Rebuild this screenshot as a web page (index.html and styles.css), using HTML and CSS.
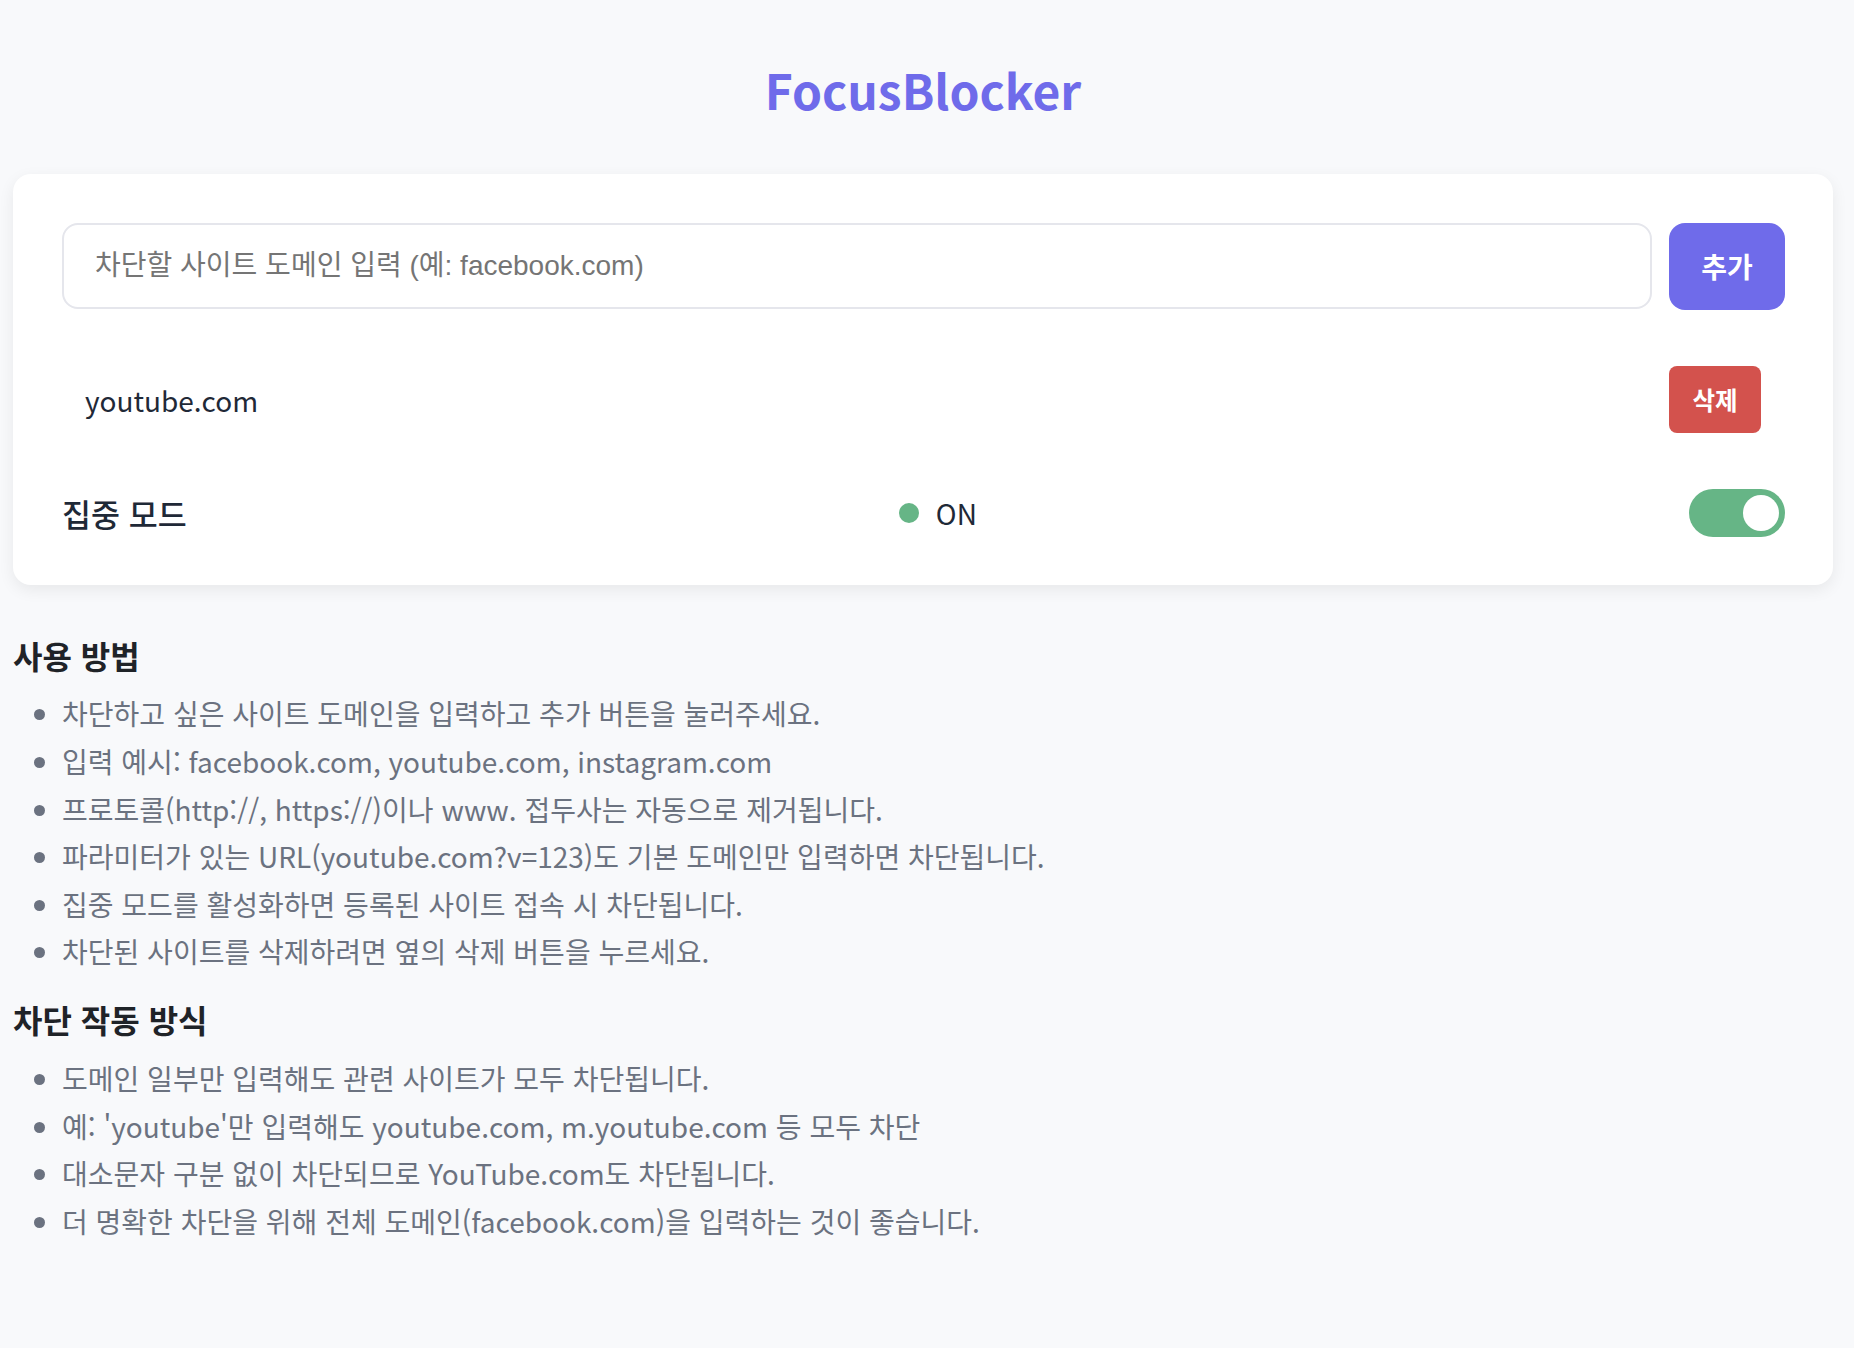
FILE: index.html
```html
<!DOCTYPE html>
<html lang="ko">
<head>
<meta charset="utf-8">
<title>FocusBlocker</title>
<link rel="stylesheet" href="styles.css">
</head>
<body>
<div class="page">
  <h1 class="title">FocusBlocker</h1>
  <div class="card">
    <div class="add-row">
      <input class="domain-input" type="text" placeholder="차단할 사이트 도메인 입력 (예: facebook.com)">
      <button class="btn-add">추가</button>
    </div>
    <ul class="site-list">
      <li class="site-item"><span class="site-name">youtube.com</span><button class="btn-delete">삭제</button></li>
    </ul>
    <div class="focus-row">
      <span class="focus-label">집중 모드</span>
      <span class="status"><span class="dot"></span>ON</span>
      <span class="switch"><span class="knob"></span></span>
    </div>
  </div>
  <section class="help">
    <h3 class="help-title">사용 방법</h3>
    <ul class="help-list">
      <li>차단하고 싶은 사이트 도메인을 입력하고 추가 버튼을 눌러주세요.</li>
      <li>입력 예시: facebook.com, youtube.com, instagram.com</li>
      <li>프로토콜(http://, https://)이나 www. 접두사는 자동으로 제거됩니다.</li>
      <li>파라미터가 있는 URL(youtube.com?v=123)도 기본 도메인만 입력하면 차단됩니다.</li>
      <li>집중 모드를 활성화하면 등록된 사이트 접속 시 차단됩니다.</li>
      <li>차단된 사이트를 삭제하려면 옆의 삭제 버튼을 누르세요.</li>
    </ul>
    <h3 class="help-title second">차단 작동 방식</h3>
    <ul class="help-list">
      <li>도메인 일부만 입력해도 관련 사이트가 모두 차단됩니다.</li>
      <li>예: 'youtube'만 입력해도 youtube.com, m.youtube.com 등 모두 차단</li>
      <li>대소문자 구분 없이 차단되므로 YouTube.com도 차단됩니다.</li>
      <li>더 명확한 차단을 위해 전체 도메인(facebook.com)을 입력하는 것이 좋습니다.</li>
    </ul>
  </section>
</div>
</body>
</html>
```

FILE: styles.css
```css
* { box-sizing: border-box; }

html, body {
  margin: 0;
  padding: 0;
  background: #f8f9fb;
}

body {
  font-family: "Noto Sans CJK KR", "Noto Sans", sans-serif;
  color: #1f2937;
  font-size: 28px;
}

.page {
  width: 1820px;
  margin-left: 13px;
  padding-bottom: 80px;
}

.title {
  margin: 61px 0 55px;
  text-align: center;
  font-size: 48px;
  line-height: 1.2;
  font-weight: 700;
  color: #6f6bea;
}

.card {
  background: #ffffff;
  border-radius: 18px;
  box-shadow: 0 5px 16px rgba(0, 0, 0, 0.07);
  padding: 49px 48px 48px 49px;
  margin-bottom: 51px;
}

.add-row {
  display: flex;
  gap: 17px;
  height: 86px;
}

.domain-input {
  flex: 1;
  height: 86px;
  border: 2px solid #e5e6ec;
  border-radius: 16px;
  padding: 0 31px;
  font-family: "Liberation Sans", "Noto Sans CJK KR", sans-serif;
  font-size: 28px;
  color: #333;
  background: #fff;
  outline: none;
}

.domain-input::placeholder {
  color: #757575;
}

.btn-add {
  width: 116px;
  height: 87px;
  border: none;
  border-radius: 16px;
  background: #6f6bea;
  color: #ffffff;
  font-family: "Noto Sans CJK KR", sans-serif;
  font-size: 28px;
  font-weight: 700;
  padding: 0;
}

.site-list {
  list-style: none;
  margin: 57px 0 0;
  padding: 0;
}

.site-item {
  display: flex;
  align-items: center;
  justify-content: space-between;
  height: 67px;
  padding: 0 24px 0 23px;
}

.site-name {
  font-size: 28px;
  color: #1f2937;
  padding-top: 2px;
}

.btn-delete {
  width: 92px;
  height: 67px;
  border: none;
  border-radius: 8px;
  background: #d3524d;
  color: #ffffff;
  font-family: "Noto Sans CJK KR", sans-serif;
  font-size: 24.5px;
  font-weight: 700;
  padding: 0;
}

.focus-row {
  display: flex;
  align-items: center;
  justify-content: space-between;
  margin-top: 56px;
  height: 48px;
}

.focus-label {
  font-size: 31.5px;
  font-weight: 500;
  color: #1f2937;
}

.status {
  display: flex;
  align-items: center;
  gap: 17px;
  font-size: 28px;
  color: #1f2937;
}

.dot {
  width: 20px;
  height: 20px;
  border-radius: 50%;
  background: #66b586;
}

.switch {
  position: relative;
  width: 96px;
  height: 48px;
  border-radius: 24px;
  background: #66b586;
}

.knob {
  position: absolute;
  top: 6px;
  right: 6px;
  width: 36px;
  height: 36px;
  border-radius: 50%;
  background: #ffffff;
}

.help-title {
  margin: 0 0 16.5px;
  font-size: 32px;
  line-height: 1.2;
  font-weight: 700;
  color: #1f2328;
}

.help-title.second {
  margin-top: 24px;
}

.help-list {
  margin: 0;
  padding-left: 49px;
  color: #6b7280;
  font-size: 28px;
  line-height: 1.7;
}
```
